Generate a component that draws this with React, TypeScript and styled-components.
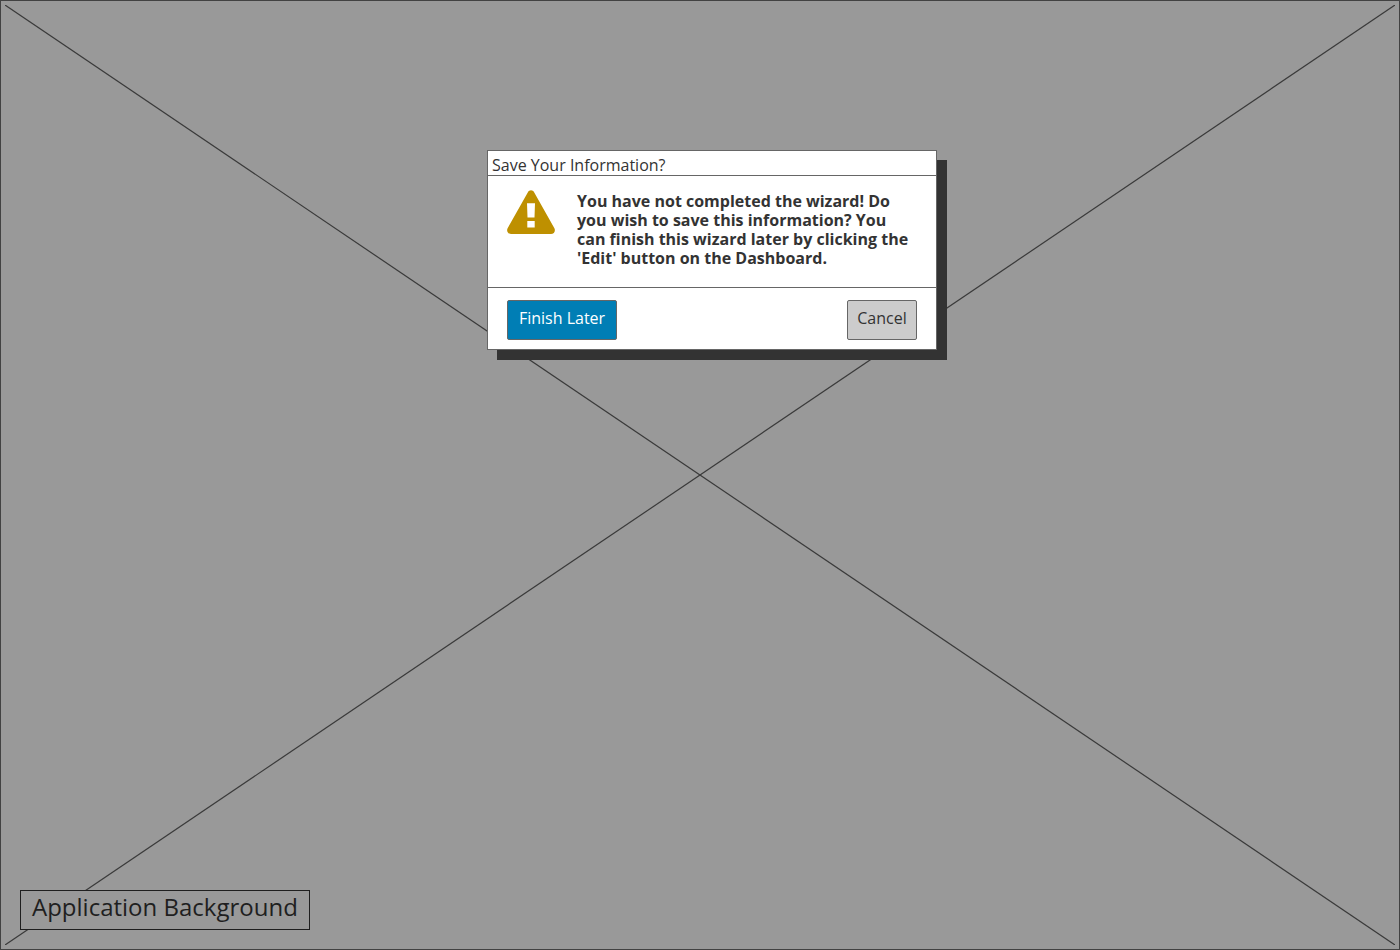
import React from "react";
import styled, { createGlobalStyle } from "styled-components";

const GlobalStyle = createGlobalStyle`
  *, *::before, *::after { box-sizing: border-box; }
  body {
    margin: 0;
    background: #999999;
    color: #333333;
    font-family: "Open Sans", "Noto Sans", sans-serif;
    font-size: 16px;
  }
`;

const Page = styled.main`
  position: relative;
  display: flex;
  flex-direction: column;
  justify-content: space-between;
  min-height: 100vh;
  padding: 149px 19px 19px;
  border: 1px solid #424242;
`;

const Cross = styled.svg`
  position: absolute;
  top: 4px;
  left: 4px;
  width: calc(100% - 8px);
  height: calc(100% - 8px);
  stroke: #3a3a3a;
  stroke-width: 1.2;
`;

const Dialog = styled.section`
  position: relative;
  align-self: center;
  width: 450px;
  max-width: 100%;
  margin-left: 24px;
  background: #ffffff;
  border: 1px solid #666666;
  box-shadow: 10px 10px 0 #333333;
`;

const DialogHeader = styled.header`
  padding: 4px 4px 0;
  border-bottom: 1px solid #666666;
`;

const DialogTitle = styled.h1`
  margin: 0;
  font-size: 16px;
  font-weight: 400;
  line-height: 20px;
`;

const DialogBody = styled.div`
  display: flex;
  align-items: flex-start;
  gap: 22px;
  padding: 14px 19px 19px;
`;

const WarningIcon = styled.svg`
  flex: none;
  width: 48px;
  height: 44px;
`;

const Message = styled.p`
  flex: 1;
  margin: 0;
  padding-top: 2px;
  font-weight: 700;
  line-height: 19px;
`;

const DialogFooter = styled.footer`
  display: flex;
  justify-content: space-between;
  padding: 12px 19px 9px;
  border-top: 1px solid #666666;
`;

const Button = styled.button<{ $primary?: boolean }>`
  width: ${({ $primary }) => ($primary ? "110px" : "70px")};
  height: 40px;
  padding: 0 0 4px;
  border: 1px solid #666666;
  border-radius: 2px;
  background: ${({ $primary }) => ($primary ? "#007eb5" : "#cccccc")};
  color: ${({ $primary }) => ($primary ? "#ffffff" : "#333333")};
  font: inherit;
  white-space: nowrap;
  cursor: pointer;
`;

const Label = styled.div`
  position: relative;
  align-self: flex-start;
  width: 290px;
  height: 40px;
  padding-left: 11px;
  border: 1px solid #1f1f1f;
  background: #999999;
  color: #1f1f1f;
  font-size: 24px;
  line-height: 31px;
  white-space: nowrap;
`;

export default function App() {
  return (
    <>
      <GlobalStyle />
      <Page>
        <Cross aria-hidden="true">
          <line x1="0" y1="0" x2="100%" y2="100%" />
          <line x1="0" y1="100%" x2="100%" y2="0" />
        </Cross>
        <Dialog role="dialog" aria-labelledby="dialog-title" aria-describedby="dialog-message">
          <DialogHeader>
            <DialogTitle id="dialog-title">Save Your Information?</DialogTitle>
          </DialogHeader>
          <DialogBody>
            <WarningIcon viewBox="0 0 48 44" aria-hidden="true">
              <path
                fill="#be9000"
                fillRule="evenodd"
                d="M20.9 2.2C21.6 1 22.7 .3 24 .3s2.4 .7 3.1 1.9L47.4 38.2C48.8 40.9 47 44 44 44H4C1 44 -.8 40.9 .6 38.2ZM20 13.2 20.5 27.5H27.5L28 13.2ZM20.3 31V37.5H27.7V31Z"
              />
            </WarningIcon>
            <Message id="dialog-message">
              You have not completed the wizard! Do you wish to save this information? You can
              finish this wizard later by clicking the 'Edit' button on the Dashboard.
            </Message>
          </DialogBody>
          <DialogFooter>
            <Button type="button" $primary>
              Finish Later
            </Button>
            <Button type="button">Cancel</Button>
          </DialogFooter>
        </Dialog>
        <Label>Application Background</Label>
      </Page>
    </>
  );
}
